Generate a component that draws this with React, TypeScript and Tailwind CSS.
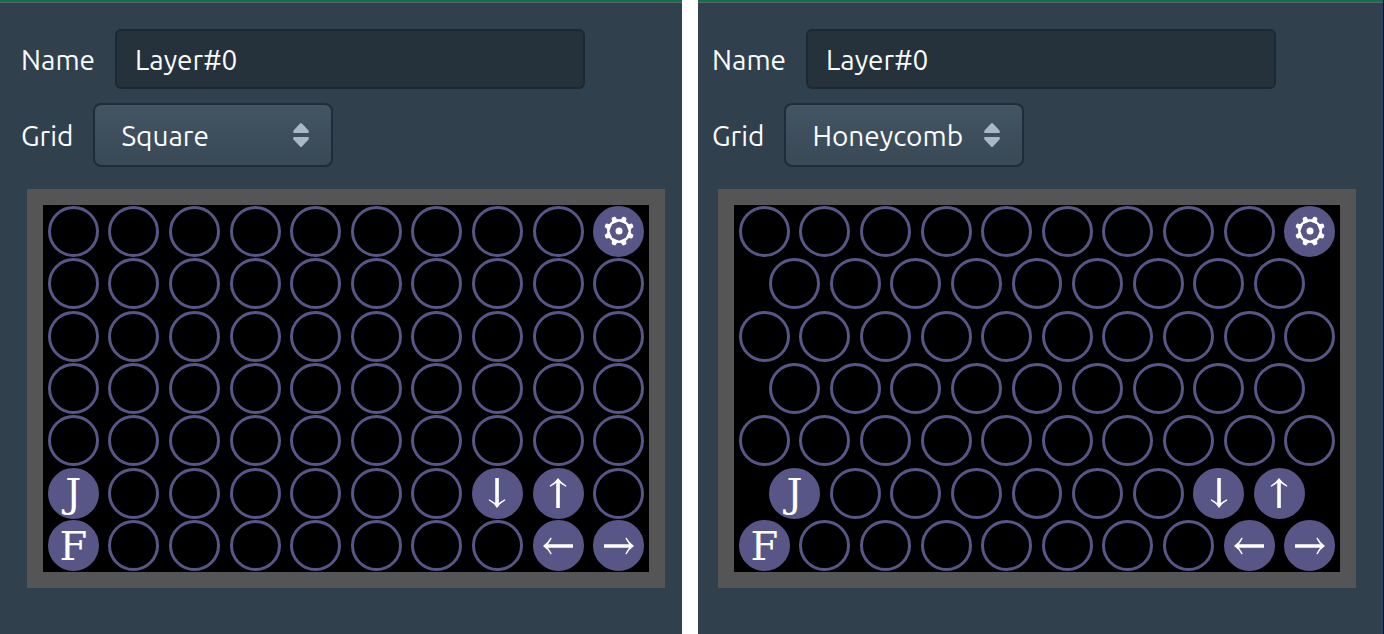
import { useState } from "react";
import clsx from "clsx";

type GridKind = "square" | "honeycomb";

const COLUMNS = 10;
const ROWS = 7;

// keyed by row-column, shared by both grid kinds
const KEYS: Record<string, string> = {
  "0-9": "settings",
  "5-0": "J",
  "5-7": "down",
  "5-8": "up",
  "6-0": "F",
  "6-8": "left",
  "6-9": "right",
};

const ARROW_TURNS: Record<string, string> = {
  right: "rotate-0",
  down: "rotate-90",
  left: "rotate-180",
  up: "-rotate-90",
};

const TEETH = [22.5, 67.5, 112.5, 157.5, 202.5, 247.5, 292.5, 337.5];

function Arrow({ direction }: { direction: string }) {
  return (
    <svg viewBox="0 0 30 30" className={clsx("w-[67%] fill-white", ARROW_TURNS[direction])} aria-hidden="true">
      <path d="M0 13.2H25Q23 10.4 21.3 7.2L22.3 6.6Q25.2 11.8 30 15Q25.2 18.2 22.3 23.4L21.3 22.8Q23 19.6 25 16.8H0Z" />
    </svg>
  );
}

function Gear() {
  return (
    <svg viewBox="0 0 30 30" className="w-[67%] fill-white" aria-hidden="true">
      <circle cx="15" cy="15" r="10.7" fill="none" stroke="white" strokeWidth="2.2" />
      <circle cx="15" cy="15" r="3.5" />
      {TEETH.map((angle) => (
        <path
          key={angle}
          d="M10.2 4.9Q12.8 3.9 12.7 1.8Q12.7.1 14 0H16Q17.3.1 17.3 1.8Q17.2 3.9 19.8 4.9L17.8 6H12.2Z"
          transform={`rotate(${angle} 15 15)`}
        />
      ))}
    </svg>
  );
}

function KeyFace({ value }: { value: string }) {
  if (value === "settings") return <Gear />;
  if (value in ARROW_TURNS) return <Arrow direction={value} />;
  return <>{value}</>;
}

function KeyButton({ value, name }: { value?: string; name: string }) {
  return (
    <button
      type="button"
      aria-label={value ?? name}
      className={clsx(
        "flex aspect-square w-[84%] items-center justify-center rounded-full border-3 border-[#585687] text-[40px] leading-none text-white",
        value && "bg-[#585687]"
      )}
    >
      {value && <KeyFace value={value} />}
    </button>
  );
}

function Keypad({ kind }: { kind: GridKind }) {
  return (
    <div className="border-16 border-[#555555] bg-black">
      <div className="flex aspect-[606/367] flex-col font-['DejaVu_Serif',serif]">
        {Array.from({ length: ROWS }, (_, row) => {
          // every second honeycomb row is one key shorter and sits half a key in
          const count = kind === "honeycomb" && row % 2 === 1 ? COLUMNS - 1 : COLUMNS;
          return (
            <div key={row} className="flex min-h-0 flex-1 justify-center">
              {Array.from({ length: count }, (_, col) => (
                <div key={col} className="flex w-[10%] items-center justify-center">
                  <KeyButton
                    value={KEYS[`${row}-${col}`]}
                    name={`Empty key, row ${row + 1}, column ${col + 1}`}
                  />
                </div>
              ))}
            </div>
          );
        })}
      </div>
    </div>
  );
}

function LayerPanel({ id, initial, className }: { id: string; initial: GridKind; className: string }) {
  const [name, setName] = useState("Layer#0");
  const [kind, setKind] = useState<GridKind>(initial);

  return (
    <section className="border-t-2 border-[#0c7248] bg-[#30404d]">
      <div className={clsx("border-t border-[#5c6570] pt-[26px]", className)}>
        <div className="-ml-[6px] flex items-center gap-5">
          <label htmlFor={`${id}-name`}>Name</label>
          <input
            id={`${id}-name`}
            value={name}
            onChange={(e) => setName(e.target.value)}
            className="h-[60px] w-[470px] min-w-0 rounded-md border-2 border-[#1d2932] bg-[#26323b] px-[18px] outline-none"
          />
        </div>

        <div className="mt-[14px] -ml-[6px] flex items-center gap-5">
          <label htmlFor={`${id}-grid`}>Grid</label>
          <div className="relative">
            <select
              id={`${id}-grid`}
              value={kind}
              onChange={(e) => setKind(e.target.value as GridKind)}
              className="h-16 w-60 appearance-none rounded-lg border-2 border-[#202d38] bg-linear-to-b from-[#435462] to-[#394956] pl-[26px] outline-none"
            >
              <option value="square">Square</option>
              <option value="honeycomb">Honeycomb</option>
            </select>
            <svg
              viewBox="0 0 16 24"
              className="pointer-events-none absolute top-5 right-6 h-6 w-4 fill-[#a9b7c6]"
              aria-hidden="true"
            >
              <path d="M7 .6Q8-.4 9 .6L15.5 7.5Q16.4 9.8 15 10H1Q-.4 9.8.5 7.5Z" />
              <path d="M7 23.4Q8 24.4 9 23.4L15.5 16.5Q16.4 14.2 15 14H1Q-.4 14.2.5 16.5Z" />
            </svg>
          </div>
        </div>

        <div className="mt-[22px]">
          <Keypad kind={kind} />
        </div>
      </div>
    </section>
  );
}

export default function App() {
  return (
    <main className="grid min-h-screen grid-cols-[682fr_685fr] gap-4 border-r border-[#0000b8] bg-white font-['Ubuntu','Noto_Sans',sans-serif] text-[28px] leading-[33px] text-[#fafcfd]">
      <LayerPanel id="left" initial="square" className="pr-[17px] pl-[27px]" />
      <LayerPanel id="right" initial="honeycomb" className="pr-[27px] pl-5" />
    </main>
  );
}
